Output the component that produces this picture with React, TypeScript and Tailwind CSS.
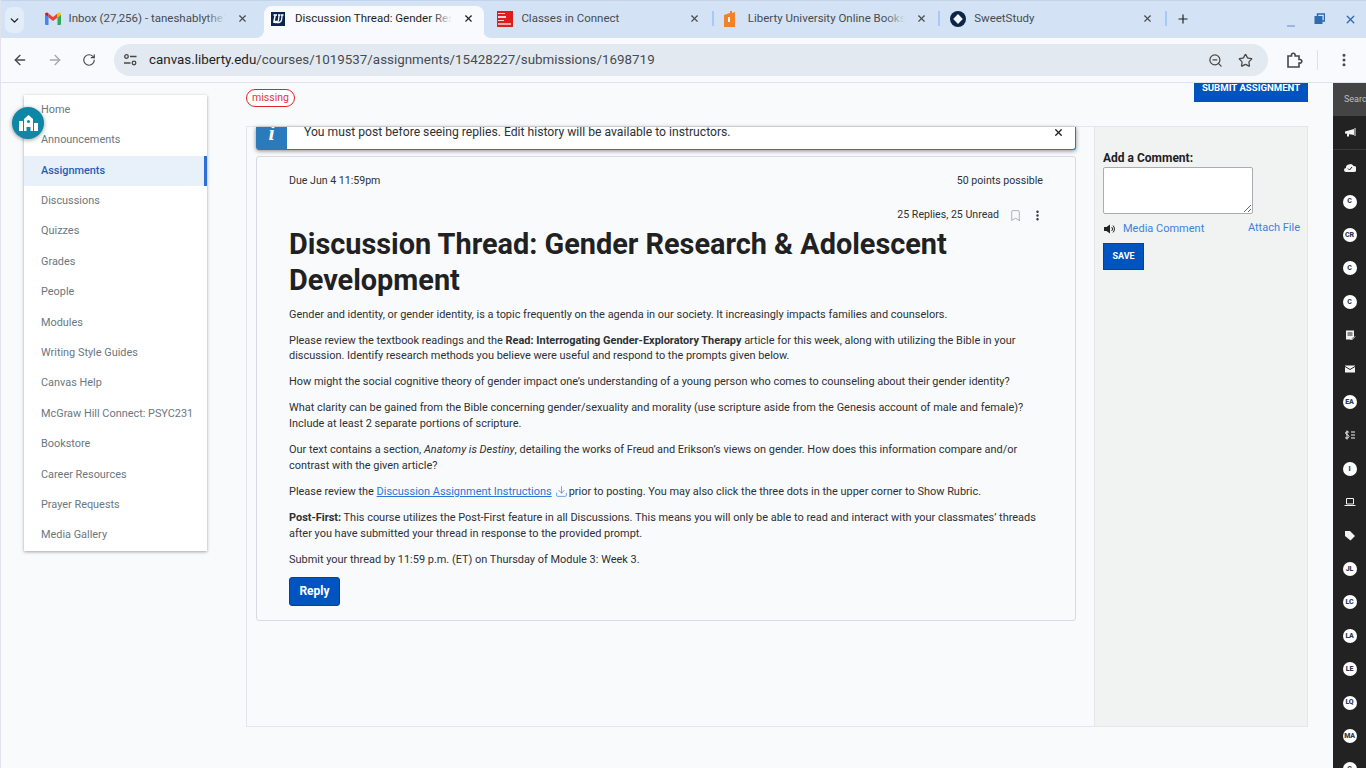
import React from "react";
import { ArrowLeft, ArrowRight, RotateCw, X, Plus, Minus, ChevronDown, ZoomOut, Star, MoreVertical, Bookmark, Download } from "lucide-react";

const F = { fontFamily: "Roboto, sans-serif" };

function Gmail() {
  return (
    <svg width="16" height="13" viewBox="0 0 16 13">
      <path d="M0 2.500V12a1 1 0 0 0 1 1h2.500V5.500z" fill="#4285f4" />
      <path d="M16 2.500V12a1 1 0 0 1-1 1h-2.500V5.500z" fill="#34a853" />
      <path d="M3.500 5.500V1.500L8 5l4.500-3.500v4L8 9z" fill="#ea4335" />
      <path d="M0 2.500C0 .8 2 -.4 3.500 1.500v4z" fill="#c5221f" />
      <path d="M16 2.500C16 .8 14 -.4 12.500 1.500v4z" fill="#fbbc04" />
    </svg>
  );
}
function LU() {
  return (
    <svg width="14" height="14" viewBox="0 0 14 14">
      <rect width="14" height="14" fill="#0a2351" />
      <path d="M2.500 3h3.500M4.200 3 3 9.500h3.500" stroke="#fff" strokeWidth="1.500" fill="none" />
      <path d="M7 3h2.500M8.200 3 7.400 8.500c-.3 2-3 2.500-5 1.700M10 3h2.500M11.200 3 10.500 8c-.4 2-2.500 3-4.500 2.500" stroke="#fff" strokeWidth="1.300" fill="none" />
    </svg>
  );
}
function McGraw() {
  return (
    <div className="w-[16px] h-[16px] bg-[#d9201f] flex flex-col justify-center pl-[1px] overflow-hidden">
      <div className="h-[1.5px] w-[7px] bg-white/80 mb-[2px]" />
      <div className="h-[1.5px] w-[8px] bg-white/80 mb-[2px]" />
      <div className="h-[1.5px] w-[6px] bg-white/80 mb-[2px]" />
      <div className="h-[1.5px] w-[13px] bg-white/60" />
    </div>
  );
}
function Liberty() {
  return (
    <svg width="11" height="16" viewBox="0 0 11 16">
      <path d="M0 4 6 2V0h2v2l3-1v15H0z" fill="#f58025" />
      <path d="M4 6h2v5H4z" fill="#fff" />
    </svg>
  );
}
function Sweet() {
  return (
    <svg width="16" height="16" viewBox="0 0 16 16">
      <circle cx="8" cy="8" r="8" fill="#0b2447" />
      <path d="M8 3 12.800 8 8 13 3.200 8z" fill="#f2f6fc" />
    </svg>
  );
}

function Tab({ icon, title, active, sep }: { icon: React.ReactNode; title: string; active?: boolean; sep?: boolean }) {
  const fade = active ? "from-transparent to-[#f8fafd]" : "from-transparent to-[#d3e3f5]";
  return (
    <div className="relative w-[226.4px] shrink-0 h-[38px]">
      {sep && <div className="absolute left-[-4px] top-[11px] w-[2px] h-[15px] bg-[#a8c7fa]" />}
      {active && (
        <>
          <div className="absolute left-[1px] right-[5px] top-[6px] bottom-0 bg-[#f8fafd] rounded-t-[8px]" />
          <svg className="absolute left-[-7px] bottom-0" width="8" height="8" viewBox="0 0 8 8"><path d="M8 0v8H0a8 8 0 0 0 8-8z" fill="#f8fafd" /></svg>
          <svg className="absolute right-[-2px] bottom-0" width="8" height="8" viewBox="0 0 8 8"><path d="M0 0v8h8a8 8 0 0 1-8-8z" fill="#f8fafd" /></svg>
        </>
      )}
      <div className="relative flex items-center h-[38px] pl-[8px]">
        <div className="w-[24px] flex items-center justify-start h-full shrink-0 pb-[1px]">{icon}</div>
        <div className={`relative w-[157px] overflow-hidden whitespace-nowrap text-[11.5px] ${active ? "text-[#1f1f1f]" : "text-[#474c50]"}`}>
          {title}
          <div className={`absolute right-0 top-0 bottom-0 w-[20px] bg-gradient-to-r ${fade}`} />
        </div>
        <X className={`absolute top-[13px] left-[200px] ${active ? "text-[#1f1f1f]" : "text-[#474c50]"}`} size={11} strokeWidth={2.5} />
      </div>
    </div>
  );
}

function Chrome() {
  return (
    <div style={F}>
      <div className="relative h-[38px] bg-[#d3e3f5] flex border-t border-[#c3d4ea]">
        <div className="ml-[5px] mt-[6px] w-[19px] h-[26px] rounded-[7px] bg-[#e3edf9] flex items-center justify-center">
          <ChevronDown size={13} strokeWidth={2.5} className="text-[#1f1f1f]" />
        </div>
        <div className="ml-[12.6px] flex -mt-[1px]">
          <Tab icon={<Gmail />} title="Inbox (27,256) - taneshablythe1" />
          <Tab active icon={<LU />} title="Discussion Thread: Gender Research" />
          <Tab icon={<McGraw />} title="Classes in Connect" />
          <Tab sep icon={<Liberty />} title="Liberty University Online Bookstore" />
          <Tab sep icon={<Sweet />} title="SweetStudy" />
          <div className="relative w-[2px] h-[15px] bg-[#a8c7fa] mt-[11px] -ml-[4px]" />
          <Plus size={14} strokeWidth={2} className="ml-[9px] mt-[11.5px] text-[#1f1f1f]" />
        </div>
        <div className="ml-auto flex items-start text-[#2f6bb0]">
          <Minus size={12} strokeWidth={2} className="mt-[19px] mr-[17px] text-[#5f8ac0]" />
          <svg width="11" height="12" viewBox="0 0 11 12" className="mt-[12px] mr-[19px]"><rect x="3.500" y="1" width="7" height="7" fill="#d3e3f5" stroke="#2f6bb0" strokeWidth="1.500" /><rect x="1" y="3.500" width="7" height="7" fill="#2f6bb0" stroke="#2f6bb0" /></svg>
          <X size={13} strokeWidth={2.5} className="mt-[12px] mr-[9px]" />
        </div>
      </div>
      <div className="h-[44px] bg-[#f8fafd] flex items-center border-b border-[#dfe3ec] box-content">
        <ArrowLeft size={16} strokeWidth={2} className="ml-[12px] text-[#474747]" />
        <ArrowRight size={16} strokeWidth={2} className="ml-[19px] text-[#a5a8ab]" />
        <RotateCw size={14} strokeWidth={2} className="ml-[19px] text-[#474747]" />
        <div className="ml-[18px] w-[1154px] h-[32px] rounded-full bg-[#e3e9f1] flex items-center">
          <div className="ml-[10px] w-[14px] h-[12px]">
            <svg width="13" height="12" viewBox="0 0 13 12" fill="none" stroke="#474747" strokeWidth="1.300"><circle cx="2.500" cy="2.500" r="1.800" /><path d="M6 2.500h6.500M0 9h6.500" /><circle cx="10" cy="9" r="1.800" /></svg>
          </div>
          <div className="ml-[11px] pt-[1px] text-[13.38px] text-[#1f1f1f] whitespace-nowrap">canvas.liberty.edu<span className="text-[#474c50]">/courses/1019537/assignments/15428227/submissions/1698719</span></div>
          <ZoomOut size={15} strokeWidth={2} className="ml-auto mr-[15px] text-[#474747]" />
          <Star size={15} strokeWidth={2} className="mr-[15px] text-[#474747]" />
        </div>
        <svg width="17" height="17" viewBox="0 0 17 17" fill="none" stroke="#474747" strokeWidth="1.600" className="ml-[18px]"><path d="M2 4h3.500V3a1.800 1.800 0 0 1 3.600 0v1H13v3.500h1a1.800 1.800 0 0 1 0 3.600h-1V15H2z" /></svg>
        <div className="ml-[14px] w-[1px] h-[20px] bg-[#d3e3f5]" />
        <MoreVertical size={16} strokeWidth={2.5} className="ml-[18px] text-[#474747]" />
      </div>
    </div>
  );
}

const NAV = ["Home", "Announcements", "Assignments", "Discussions", "Quizzes", "Grades", "People", "Modules", "Writing Style Guides", "Canvas Help", "McGraw Hill Connect: PSYC231", "Bookstore", "Career Resources", "Prayer Requests", "Media Gallery"];

function LeftNav() {
  return (
    <div className="w-[183px] ml-[24px] mt-[12px] h-[456px] bg-white shadow-[0_1px_3px_rgba(0,0,0,0.35)] shrink-0 text-[10.9px] text-[#6b7780]">
      {NAV.map((n) => (
        <div key={n} className={`h-[30.4px] flex items-center pl-[17px] pb-[0.25px] whitespace-nowrap ${n === "Assignments" ? "bg-[#e8f0f9] text-[#1f5fb5] font-medium border-r-[3px] border-[#2d6fd2]" : ""}`}>{n}</div>
      ))}
    </div>
  );
}

const P = "mb-[10.25px] leading-[15.75px]";

function Card() {
  return (
    <div className="mt-[6px] w-[820px] h-[465px] border border-[#d7dbe1] rounded-[3px] bg-[#f9fafc] px-[32px] text-[10.94px] text-[#2d3b45]">
      <div className="flex justify-between h-[46px] items-center pt-[1px] text-[#2d3135]">
        <span className="text-[10.6px]">Due Jun 4 11:59pm</span><span className="text-[10.6px]">50 points possible</span>
      </div>
      <div className="flex justify-end items-center h-[22px] mt-[1px] text-[#2d3135]">
        <span className="text-[10.6px]">25 Replies, 25 Unread</span>
        <Bookmark size={13} strokeWidth={1} className="ml-[10px] text-[#6b7780]" />
        <MoreVertical size={13} strokeWidth={2.5} className="ml-[9px] mr-[-1px] text-[#2d3135]" />
      </div>
      <h1 className="text-[28.875px] font-bold leading-[36px] text-[#1f2123] mb-[8.7px]">Discussion Thread: Gender Research &amp; Adolescent Development</h1>
      <div className="text-[#2d3135]">
        <p className={P}>Gender and identity, or gender identity, is a topic frequently on the agenda in our society. It increasingly impacts families and counselors.</p>
        <p className={P}>Please review the textbook readings and the <b>Read: Interrogating Gender-Exploratory Therapy</b> article for this week, along with utilizing the Bible in your discussion. Identify research methods you believe were useful and respond to the prompts given below.</p>
        <p className={P}>How might the social cognitive theory of gender impact one’s understanding of a young person who comes to counseling about their gender identity?</p>
        <p className={P}>What clarity can be gained from the Bible concerning gender/sexuality and morality (use scripture aside from the Genesis account of male and female)? Include at least 2 separate portions of scripture.</p>
        <p className={P}>Our text contains a section, <i>Anatomy is Destiny</i>, detailing the works of Freud and Erikson’s views on gender. How does this information compare and/or contrast with the given article?</p>
        <p className={P}>Please review the <span className="text-[#2a76d8] underline">Discussion Assignment Instructions</span><Download size={13} strokeWidth={1.2} className="inline ml-[3px] mr-[1px] -mt-[2px] text-[#2a76d8]" />prior to posting. You may also click the three dots in the upper corner to Show Rubric.</p>
        <p className={P}><b>Post-First:</b> This course utilizes the Post-First feature in all Discussions. This means you will only be able to read and interact with your classmates’ threads after you have submitted your thread in response to the provided prompt.</p>
        <p className={P}>Submit your thread by 11:59 p.m. (ET) on Thursday of Module 3: Week 3.</p>
      </div>
      <button className="-mt-[1px] w-[51px] h-[29px] bg-[#0054bf] border border-[#00439a] rounded-[3px] text-white font-bold text-[12px]">Reply</button>
    </div>
  );
}

function Side() {
  return (
    <div className="w-[213px] bg-[#f1f3f3] border-l border-[#e3e6ea] pl-[8px] pt-[24px] shrink-0">
      <div className="text-[12px] font-bold leading-[14px] text-[#1f2123]">Add a Comment:</div>
      <textarea className="block mt-[2px] w-[150px] h-[47px] bg-white border border-[#a9adb1] rounded-[2px]" style={{ resize: "both" }} />
      <div className="flex items-center mt-[7px] w-[197px] h-[16px] text-[11px] text-[#3b82dc]">
        <svg width="12" height="10" viewBox="0 0 12 10" className="mr-[7px] ml-[1px]"><path d="M0 3h2.500L6 .5v9L2.500 7H0z" fill="#222" /><path d="M7.500 3a2.500 2.500 0 0 1 0 4M9 1.500a5 5 0 0 1 0 7" stroke="#222" fill="none" /></svg>
        <span>Media Comment</span>
        <span className="ml-auto -mt-[2px]">Attach File</span>
      </div>
      <button className="mt-[6px] w-[41px] h-[27px] bg-[#0054bf] border border-[#00439a] text-white font-bold text-[9px]">SAVE</button>
    </div>
  );
}

function Circle({ t }: { t: string }) {
  return <div className="w-[14px] h-[14px] rounded-full bg-white flex items-center justify-center text-[7px] font-black text-[#2b3a55] tracking-[-0.2px]">{t}</div>;
}
const G = (p: React.ReactNode) => <svg width="12" height="12" viewBox="0 0 12 12" fill="#f2f2f2">{p}</svg>;
const RAIL: React.ReactNode[] = [
  G(<><path d="M1 4.500 10 2v6L1 6.500z" /><path d="M11 1v8" stroke="#f2f2f2" /><path d="M3 7h2v2.500H3z" /></>),
  G(<><path d="M2 10a2 2 0 0 1 0-4 3 3 0 0 1 3-3.500A3 3 0 0 1 9.500 4 3 3 0 0 1 10 10z" /><path d="m4 6.500 1.500 1.500L8 5" stroke="#222" fill="none" /></>),
  <Circle t="C" />, <Circle t="CR" />, <Circle t="C" />, <Circle t="C" />,
  G(<><path d="M2 1.500h8v6L7 10.500H2z" /><path d="M3.500 4h5M3.500 6h5" stroke="#222" /><path d="m6 9.500 1.500 1.500L11 7.500" stroke="#f2f2f2" fill="none" /></>),
  G(<><path d="M1 2.500h10v7H1z" /><path d="M1 3.500l5 3 5-3" stroke="#222" fill="none" /></>),
  <Circle t="EA" />,
  G(<><path d="M5 3.500C4.500 2.500 1.500 2.500 1.500 4S5 5.500 5 7.500 1.500 9.500 1 8.500M3 1.500v9" stroke="#f2f2f2" fill="none" /><path d="M7 3h4M7 6h4M7 9h4" stroke="#f2f2f2" /></>),
  <Circle t="I" />,
  G(<><path d="M2.500 2.500h7v5.500h-7z" fill="none" stroke="#f2f2f2" /><path d="M0.500 9.500h11" stroke="#f2f2f2" /></>),
  G(<path d="M1 1h5l5 5-4.500 4.500L1 6z" />),
  <Circle t="JL" />, <Circle t="LC" />, <Circle t="LA" />, <Circle t="LE" />, <Circle t="LQ" />, <Circle t="MA" />, <Circle t="C" />,
];

function Rail() {
  return (
    <div className="ml-[25px] w-[33px] h-[685px] overflow-hidden bg-[#222222] shrink-0 text-white">
      <div className="h-[33px] bg-[#444444] text-[9px] text-[#bdbdbd] flex items-center pl-[11px] whitespace-nowrap overflow-hidden">Search</div>
      <div className="h-[34px] mb-[1.6px] flex items-center justify-center border-b border-[#3a3a3a]">{RAIL[0]}</div>
      {RAIL.slice(1).map((r, i) => (
        <div key={i} className="h-[33.4px] flex items-center justify-center">{r}</div>
      ))}
    </div>
  );
}

export default function App() {
  return (
    <div className="w-[1366px] h-[768px] overflow-hidden bg-[#f9fafc] border-l border-[#dfe3ec]" style={F}>
      <div className="-ml-[1px]"><Chrome /></div>
      <div className="relative flex h-[685px] -ml-[1px]">
        <LeftNav />
        <div className="absolute left-[12px] top-[24px] w-[32px] h-[32px] rounded-full bg-[#0d87a5] shadow-[0_1px_4px_rgba(0,0,0,0.4)] flex items-center justify-center">
          <svg width="19" height="16" viewBox="0 0 19 16" fill="#fff"><path d="M0 6h4v10H0zM15 8h4v8h-4z" /><path d="M5 4 9.500 0 14 4v12h-2.500v-4h-4v4H5z" /><circle cx="9.500" cy="6.500" r="1.500" fill="#0d87a5" /></svg>
        </div>
        <div className="ml-[39px] w-[1062px] shrink-0">
          <div className="flex justify-between h-[43px] items-start">
            <div className="mt-[6px] h-[18px] w-[49px] rounded-full border border-[#e0232b] bg-white text-[#e8333b] text-[10.5px] flex items-center justify-center">missing</div>
            <button className="w-[114px] h-[19px] bg-[#0054bf] text-white text-[9.6px] font-bold flex items-start justify-center leading-[9px]">SUBMIT ASSIGNMENT</button>
          </div>
          <div className="flex h-[601px] border border-[#e3e6ea]">
            <div className="flex-1 pl-[9px]">
              <div className="w-[820px] h-[23px] flex overflow-hidden bg-white border-b border-r border-[#2b7abc] rounded-b-[3px] shadow-[0_1px_4px_rgba(0,0,0,0.45)]">
                <div className="w-[31px] bg-[#2b7abc] shrink-0 flex justify-center overflow-hidden">
                  <span className="text-white font-bold italic text-[22px] leading-[16px] -mt-[2px]" style={{ fontFamily: "'Liberation Serif', serif" }}>i</span>
                </div>
                <div className="ml-[17px] text-[12.17px] leading-[16px] -mt-[3px] text-[#2d3135] whitespace-nowrap">You must post before seeing replies. Edit history will be available to instructors.</div>
                <X size={11} strokeWidth={3} className="ml-auto mr-[11px] text-[#222]" />
              </div>
              <Card />
            </div>
            <Side />
          </div>
        </div>
        <Rail />
      </div>
    </div>
  );
}
